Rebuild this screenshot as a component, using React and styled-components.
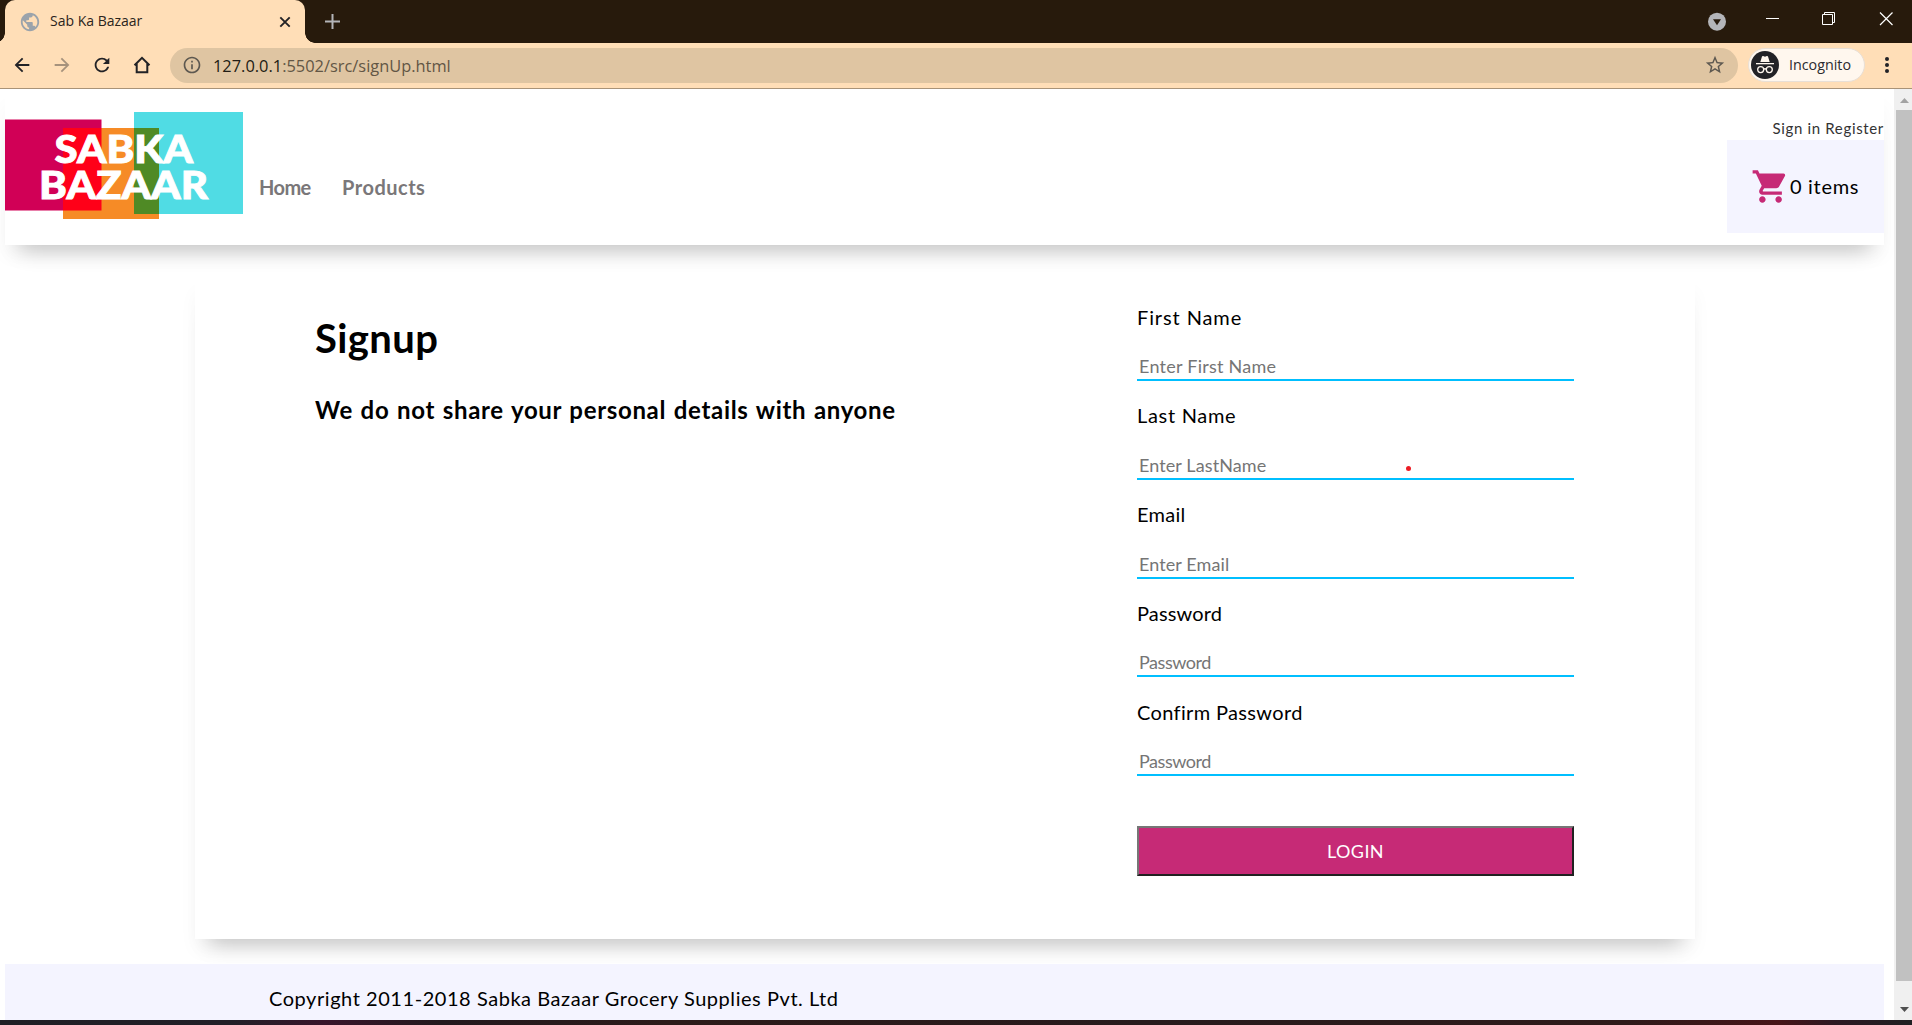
import React from 'react';
import styled, { createGlobalStyle } from 'styled-components';
import { MdPublic, MdShoppingCart, MdStarBorder, MdInfoOutline, MdArrowBack, MdArrowForward, MdRefresh } from 'react-icons/md';

const GlobalStyle = createGlobalStyle`
  * { box-sizing: border-box; }
  body { margin: 0; background: #fff; overflow: hidden; }
`;

const HAND = '"Comic Sans MS", Lato, sans-serif';
const UI = '"Segoe UI", "Open Sans", sans-serif';

const Window = styled.div`
  display: flex;
  flex-direction: column;
  width: 1912px;
  height: 1025px;
  overflow: hidden;
`;

/* Browser frame */
const TabStrip = styled.div`
  display: flex;
  flex: none;
  height: 43px;
  padding-left: 5px;
  background: #271a0c;
`;
const Tab = styled.div`
  position: relative;
  display: flex;
  align-items: center;
  width: 300px;
  height: 43px;
  padding: 0 14px 0 14px;
  background: #ffdeb7;
  border-radius: 10px 10px 0 0;
  &::before, &::after {
    content: '';
    position: absolute;
    bottom: 0;
    width: 10px;
    height: 10px;
  }
  &::before { left: -10px; background: radial-gradient(circle at 0 0, #271a0c 9.5px, #ffdeb7 10px); }
  &::after { right: -10px; background: radial-gradient(circle at 100% 0, #271a0c 9.5px, #ffdeb7 10px); }
`;
const TabTitle = styled.span`
  flex: 1;
  margin-left: 9px;
  padding-bottom: 2px;
  font: 14px/20px ${UI};
  color: #2b241c;
`;
const NewTab = styled.div`
  display: flex;
  align-items: center;
  margin-left: 20px;
`;
const WindowControls = styled.div`
  display: flex;
  margin-left: auto;
`;
const ControlIcon = styled.svg`
  width: ${p => p.$w}px;
  height: 43px;
  fill: none;
  stroke: #fff;
`;

const Toolbar = styled.div`
  display: flex;
  flex: none;
  align-items: center;
  height: 46px;
  padding: 0 0 1px 11px;
  background: #ffdeb7;
  border-bottom: 1px solid #a99378;
  color: #222226;
`;
const NavIcons = styled.div`
  display: flex;
  gap: 18px;
  width: 159px;
  svg { flex: none; width: 22px; height: 22px; }
`;
const Forward = styled(MdArrowForward)`
  opacity: 0.4;
`;
const AddressBar = styled.div`
  display: flex;
  align-items: center;
  width: 1568px;
  height: 35px;
  padding: 0 12px 0 12px;
  border-radius: 18px;
  background: #dfc5a2;
  color: #5d5850;
`;
const Url = styled.span`
  flex: 1;
  margin-left: 11px;
  padding-top: 1px;
  font: 16.4px/24px ${UI};
  color: #625645;
  b { font-weight: 400; color: #221c14; }
`;
const Incognito = styled.div`
  display: flex;
  align-items: center;
  width: 117px;
  height: 34px;
  margin-left: 10px;
  padding-left: 2px;
  border: 1px solid #e8dfd6;
  border-radius: 17px;
  background: #fff7ee;
  font: 14.3px/20px ${UI};
  color: #2b2b2e;
  svg { margin-right: 10px; }
`;
const Kebab = styled.div`
  display: flex;
  flex-direction: column;
  gap: 2.4px;
  margin-left: 20px;
  i { width: 4px; height: 4px; border-radius: 50%; background: #222226; }
`;

/* Page area */
const Viewport = styled.div`
  display: flex;
  flex: none;
  height: 931px;
  overflow: hidden;
`;
const Page = styled.div`
  display: flex;
  flex-direction: column;
  width: 1894px;
  padding: 5px 10px 0 5px;
  overflow: hidden;
  font-family: ${HAND};
  color: #000;
`;
const lifted = `box-shadow: 0 20px 20px -15px rgba(0, 0, 0, 0.22), 0 12px 18px 0 rgba(0, 0, 0, 0.035);`;

const Header = styled.header`
  display: flex;
  flex: none;
  height: 151px;
  background: #fff;
  ${lifted}
`;
const Logo = styled.svg`
  flex: none;
  width: 238px;
  height: 107px;
  margin-top: 18px;
  font-family: Lato, sans-serif;
  font-weight: 900;
`;
const Nav = styled.nav`
  display: flex;
  padding: 81px 0 0 16px;
`;
const NavLink = styled.a`
  width: ${p => p.$width}px;
  font-size: 20px;
  font-weight: 700;
  line-height: 24px;
  letter-spacing: ${p => p.$spacing}px;
  color: #7a7779;
`;
const Account = styled.div`
  display: flex;
  flex-direction: column;
  align-items: flex-end;
  margin-left: auto;
  padding-top: 24px;
`;
const AccountLinks = styled.div`
  margin-bottom: 2px;
  font-size: 15px;
  line-height: 20px;
  letter-spacing: 0.66px;
  white-space: nowrap;
  color: #333;
`;
const Cart = styled.div`
  display: flex;
  align-items: center;
  width: 157px;
  height: 93px;
  padding: 0 0 1px 24px;
  background: #f4f4ff;
  font-size: 20px;
  line-height: 24px;
  letter-spacing: 0.7px;
`;

const Card = styled.main`
  display: flex;
  flex: none;
  width: 1500px;
  height: 659px;
  margin: 35px 0 25px 190px;
  padding: 0 121px;
  background: #fff;
  ${lifted}
`;
const Intro = styled.section`
  width: 821px;
  padding-top: 34px;
`;
const Title = styled.h1`
  margin: 0 0 33px -1px;
  font-size: 40px;
  line-height: 48px;
  letter-spacing: 0.4px;
`;
const Subtitle = styled.h2`
  margin: 0 0 0 -1px;
  font-size: 24px;
  line-height: 30px;
  word-spacing: 1.2px;
  letter-spacing: 0.67px;
`;
const Form = styled.form`
  display: flex;
  flex-direction: column;
  gap: 20.75px;
  width: 437px;
  padding-top: 23px;
`;
const Field = styled.label`
  position: relative;
  display: flex;
  flex-direction: column;
  gap: 22.4px;
  height: 78px;
`;
const FieldName = styled.span`
  margin-top: -0.4px;
  font-size: 20px;
  line-height: 28px;
  letter-spacing: ${p => p.$spacing}px;
`;
const Input = styled.input`
  width: 100%;
  height: 28px;
  padding: 0 2px;
  border: 0;
  border-bottom: 2px solid #00bfff;
  outline: none;
  background: none;
  font: 18px/26px ${HAND};
  letter-spacing: ${p => p.$spacing}px;
  &::placeholder { color: #757575; opacity: 1; }
`;
const Pointer = styled.i`
  position: absolute;
  left: 269px;
  top: 64px;
  width: 5px;
  height: 5px;
  border-radius: 50%;
  background: #ec1c24;
`;
const Submit = styled.button`
  height: 50px;
  margin-top: 29px;
  padding: 0;
  border: 2px solid;
  border-color: #767676 #212121 #212121 #767676;
  background: #c62a76;
  color: #fff;
  font: 18px/24px ${HAND};
  letter-spacing: 0.4px;
`;
const Footer = styled.footer`
  position: relative;
  flex: none;
  height: 80px;
  padding: 20px 0 0 264px;
  background: #f4f4ff;
  font-size: 20px;
  line-height: 28px;
  letter-spacing: 0.55px;
`;

const Scrollbar = styled.div`
  display: flex;
  flex-direction: column;
  width: 18px;
  padding-left: 2px;
  background: #f0f0f0;
`;
const ScrollThumb = styled.div`
  height: 871px;
  background: #c1c1c1;
`;
const ScrollArrow = styled.svg`
  width: 16px;
  height: ${p => p.$h}px;
`;
const Taskbar = styled.div`
  flex: 1;
  background: linear-gradient(90deg, #1f1f25 0%, #211f27 12%, #38152b 17%, #23191e 23%, #2c1b1a 35%, #271a1c 60%, #2e1a1a 85%, #471418 93%, #2c1822 96%, #202022 100%);
`;

const FIELDS = [
  { label: 'First Name', hint: 'Enter First Name', type: 'text', ls: 0.9, hs: 0.25 },
  { label: 'Last Name', hint: 'Enter LastName', type: 'text', ls: 0.7, hs: 0.1, pointer: true },
  { label: 'Email', hint: 'Enter Email', type: 'email', ls: 0.25, hs: 0.1 },
  { label: 'Password', hint: 'Password', type: 'password', ls: 0.15, hs: -0.45 },
  { label: 'Confirm Password', hint: 'Password', type: 'password', ls: 0.35, hs: -0.45 },
];

const SabkaLogo = () => (
  <Logo viewBox="0 0 238 107">
    <rect x="0" y="7.5" width="96.5" height="91" fill="#d10056" />
    <rect x="58" y="16" width="96" height="91" fill="#f68b26" />
    <rect x="129" y="0" width="109" height="102" fill="#50dce4" />
    <rect x="58" y="16" width="38.5" height="82.5" fill="#ff0018" />
    <rect x="129" y="16" width="25" height="86" fill="#4f8a25" />
    <g fill="#fff" stroke="#fff" strokeWidth="0.9" fontSize="38">
      <text x="49.5" y="50.5" textLength="138.5" lengthAdjust="spacingAndGlyphs">SABKA</text>
      <text x="34" y="86.5" textLength="169" lengthAdjust="spacingAndGlyphs">BAZAAR</text>
    </g>
  </Logo>
);

const SpyIcon = () => (
  <svg width="28" height="28" viewBox="0 0 28 28">
    <circle cx="14" cy="14" r="14" fill="#222226" />
    <path d="M9.3 11 11 5.6q.3-.8 1.2-.5l1.8.6 1.8-.6q.9-.3 1.2.5L18.700 11z" fill="#fff7ee" />
    <path d="M5 12h18v1.300H5z" fill="#fff7ee" />
    <g fill="none" stroke="#fff7ee" strokeWidth="1.300">
      <circle cx="9.700" cy="18.600" r="3" />
      <circle cx="18.300" cy="18.600" r="3" />
      <path d="M12.700 18.200q1.300-.9 2.600 0" />
    </g>
  </svg>
);

export default function App() {
  return (
    <Window>
      <GlobalStyle />
      <TabStrip>
        <Tab>
          <MdPublic size={22} color="#9ba3ab" />
          <TabTitle>Sab Ka Bazaar</TabTitle>
          <svg width="12" height="12" viewBox="0 0 12 12" stroke="#222226" strokeWidth="1.9">
            <path d="M1.300 1.300 10.700 10.700M10.700 1.300 1.300 10.700" />
          </svg>
        </Tab>
        <NewTab>
          <svg width="15" height="15" viewBox="0 0 15 15" stroke="#b3b4b8" strokeWidth="2">
            <path d="M7.500 0v15M0 7.500h15" />
          </svg>
        </NewTab>
        <WindowControls>
          <ControlIcon $w={58} viewBox="0 0 58 43">
            <circle cx="21" cy="21.700" r="9" fill="#b4b5b9" stroke="none" />
            <path d="M17 19.200h8l-4 6z" fill="#271a0c" stroke="none" />
          </ControlIcon>
          <ControlIcon $w={56} viewBox="0 0 56 43"><path d="M12 18.500h13" /></ControlIcon>
          <ControlIcon $w={50} viewBox="0 0 50 43">
            <path d="M12.500 14.500h10v10h-10zM14.500 14.500v-2h10v10h-2" />
          </ControlIcon>
          <ControlIcon $w={52} viewBox="0 0 52 43"><path d="M20 12.500l12.500 12.500M32.500 12.500 20 25" strokeWidth="1.200" /></ControlIcon>
        </WindowControls>
      </TabStrip>

      <Toolbar>
        <NavIcons>
          <MdArrowBack />
          <Forward />
          <MdRefresh />
          <svg viewBox="0 0 22 22" fill="none" stroke="currentColor" strokeWidth="2">
            <path d="M3.500 11.200 11 3.800 18.500 11.200M5.700 9.500V18.200h10.600V9.500" />
          </svg>
        </NavIcons>
        <AddressBar>
          <MdInfoOutline size={20} />
          <Url><b>127.0.0.1</b>:5502/src/signUp.html</Url>
          <MdStarBorder size={22} />
        </AddressBar>
        <Incognito><SpyIcon />Incognito</Incognito>
        <Kebab><i /><i /><i /></Kebab>
      </Toolbar>

      <Viewport>
        <Page>
          <Header>
            <SabkaLogo />
            <Nav>
              <NavLink $width={83} $spacing={-0.6}>Home</NavLink>
              <NavLink $width={90} $spacing={0.5}>Products</NavLink>
            </Nav>
            <Account>
              <AccountLinks>Sign in Register</AccountLinks>
              <Cart><MdShoppingCart size={39} color="#c62a76" />0 items</Cart>
            </Account>
          </Header>

          <Card>
            <Intro>
              <Title>Signup</Title>
              <Subtitle>We do not share your personal details with anyone</Subtitle>
            </Intro>
            <Form>
              {FIELDS.map(f => (
                <Field key={f.label}>
                  <FieldName $spacing={f.ls}>{f.label}</FieldName>
                  <Input type={f.type} placeholder={f.hint} $spacing={f.hs} />
                  {f.pointer && <Pointer />}
                </Field>
              ))}
              <Submit type="button">LOGIN</Submit>
            </Form>
          </Card>

          <Footer>Copyright 2011-2018 Sabka Bazaar Grocery Supplies Pvt. Ltd</Footer>
        </Page>
        <Scrollbar>
          <ScrollArrow $h={21} viewBox="0 0 16 21"><path d="M4 14 8.500 9 13 14z" fill="#a3a3a3" /></ScrollArrow>
          <ScrollThumb />
          <ScrollArrow $h={39} viewBox="0 0 16 39"><path d="M4 26 8.500 31 13 26z" fill="#505050" /></ScrollArrow>
        </Scrollbar>
      </Viewport>
      <Taskbar />
    </Window>
  );
}
